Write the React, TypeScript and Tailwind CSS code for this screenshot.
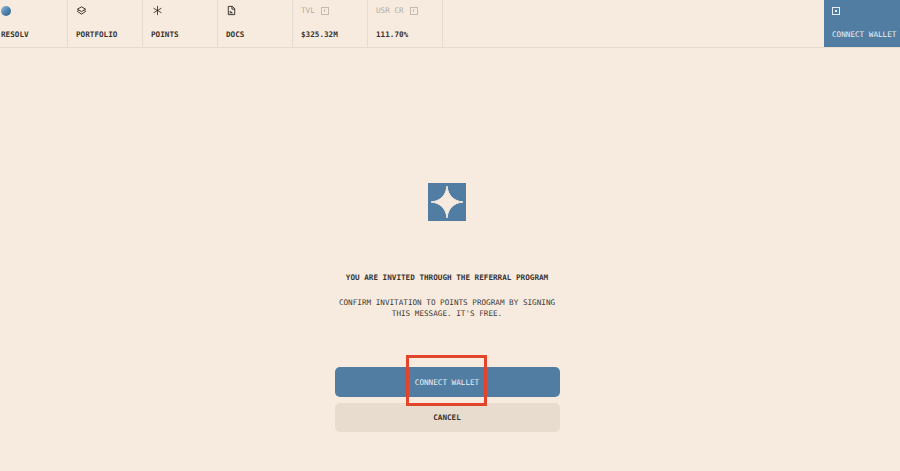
const links = [
  {
    label: 'PORTFOLIO',
    icon: (
      <svg viewBox="0 0 12 12" className="w-[11px] h-[11px]" fill="none" stroke="currentColor" strokeWidth={1}>
        <path d="M6 2 L10.5 4.6 L6 7.2 L1.5 4.6 Z" />
        <path d="M2.6 5.6 L1.5 7 L6 10 L10.5 7 L9.4 5.6" />
      </svg>
    ),
  },
  {
    label: 'POINTS',
    icon: (
      <svg viewBox="0 0 12 12" className="w-[11px] h-[11px] ml-px" fill="none" stroke="currentColor" strokeWidth={0.9}>
        <path d="M6 1 V11 M1.7 3.5 L10.3 8.5 M10.3 3.5 L1.7 8.5" />
      </svg>
    ),
  },
  {
    label: 'DOCS',
    icon: (
      <svg viewBox="0 0 12 12" className="w-[11px] h-[11px]" fill="none" stroke="currentColor" strokeWidth={1}>
        <path d="M2.5 1.5 H7 L9.5 4 V10.5 H2.5 Z" />
        <path d="M6.5 1.5 V4.5 H9.5" />
        <path d="M4 7 L7 9 M4 9 L6 7.5" strokeWidth={1.1} />
      </svg>
    ),
  },
];

const stats = [
  { label: 'TVL', value: '$325.32M' },
  { label: 'USR CR', value: '111.70%' },
];

function NavCell({ top, label }: { top: React.ReactNode; label: string }) {
  return (
    <div className="w-[75px] h-full border-r border-[#e6dbce] pl-2 pt-[5px] flex flex-col">
      <div className="h-[11px] flex items-center">{top}</div>
      <div className="mt-[14px] text-[7.65px] leading-[10px] font-bold text-[#3a342f]">{label}</div>
    </div>
  );
}

export default function App() {
  return (
    <div className="relative w-[900px] h-[471px] overflow-hidden bg-[#f7ebdf] font-['DejaVu_Sans_Mono',monospace]">
      {/* Top nav */}
      <div className="flex h-[48px] border-b border-[#e6dbce]">
        <div className="w-[68px] h-full border-r border-[#e6dbce] pl-px pt-[5px] flex flex-col">
          <div className="h-[11px] flex items-center">
            <div className="w-[10px] h-[10px] rounded-full bg-gradient-to-br from-[#9dbdd2] via-[#4f86b3] to-[#33618a]" />
          </div>
          <div className="mt-[14px] text-[7.65px] leading-[10px] font-bold text-[#3a342f]">RESOLV</div>
        </div>
        {links.map((link) => (
          <NavCell key={link.label} top={<span className="text-[#2b2622]">{link.icon}</span>} label={link.label} />
        ))}
        {stats.map((stat) => (
          <NavCell
            key={stat.label}
            label={stat.value}
            top={
              <div className="flex items-center gap-[6px] text-[7.65px] text-[#b5aca2]">
                <span>{stat.label}</span>
                <span className="w-[8px] h-[8px] border border-[#c4bbb0] flex items-center justify-center">
                  <span className="w-px h-[3px] bg-[#c4bbb0]" />
                </span>
              </div>
            }
          />
        ))}
        <div className="ml-auto w-[76px] h-[47px] bg-[#527da3] pl-2 pt-[5px] flex flex-col text-[#e9eef2]">
          <div className="h-[11px] flex items-center">
            <span className="w-[8px] h-[8px] border border-[#e9eef2] flex items-center justify-center">
              <span className="w-[2px] h-[2px] bg-[#e9eef2]" />
            </span>
          </div>
          <div className="mt-[14px] text-[7.65px] leading-[10px] whitespace-nowrap">CONNECT WALLET</div>
        </div>
      </div>

      {/* Invitation */}
      <div className="flex flex-col items-center pt-[135px] pr-[6px]">
        <div className="w-[38px] h-[38px] bg-[#527da3] flex items-center justify-center">
          <svg viewBox="0 0 38 38" className="w-[38px] h-[38px]">
            <path d="M19 3 C20 12.5 25.5 18 35 19 C25.5 20 20 25.5 19 35 C18 25.5 12.5 20 3 19 C12.5 18 18 12.5 19 3 Z" fill="#f7ebdf" stroke="#f7ebdf" strokeWidth={1} />
          </svg>
        </div>
        <div className="mt-[52px] text-[7.65px] leading-[10px] font-bold text-[#3a342f]">
          YOU ARE INVITED THROUGH THE REFERRAL PROGRAM
        </div>
        <div className="mt-[14px] text-[7.65px] leading-[11px] text-[#3f3933] text-center">
          CONFIRM INVITATION TO POINTS PROGRAM BY SIGNING
          <br />
          THIS MESSAGE. IT'S FREE.
        </div>
        <div className="mt-[48px] w-[225px] flex flex-col gap-[6px]">
          <button className="h-[30px] rounded-[5px] bg-[#527da3] pt-[2px] text-[7.65px] text-[#e9eef2]">CONNECT WALLET</button>
          <button className="h-[29px] rounded-[5px] bg-[#e8dccf] pt-[1px] text-[7.65px] font-bold text-[#3a342f]">CANCEL</button>
        </div>
      </div>

      {/* Annotation box drawn over the button */}
      <div className="absolute left-[406px] top-[355px] w-[81px] h-[51px] border-[3px] border-[#e2452c]" />
    </div>
  );
}
